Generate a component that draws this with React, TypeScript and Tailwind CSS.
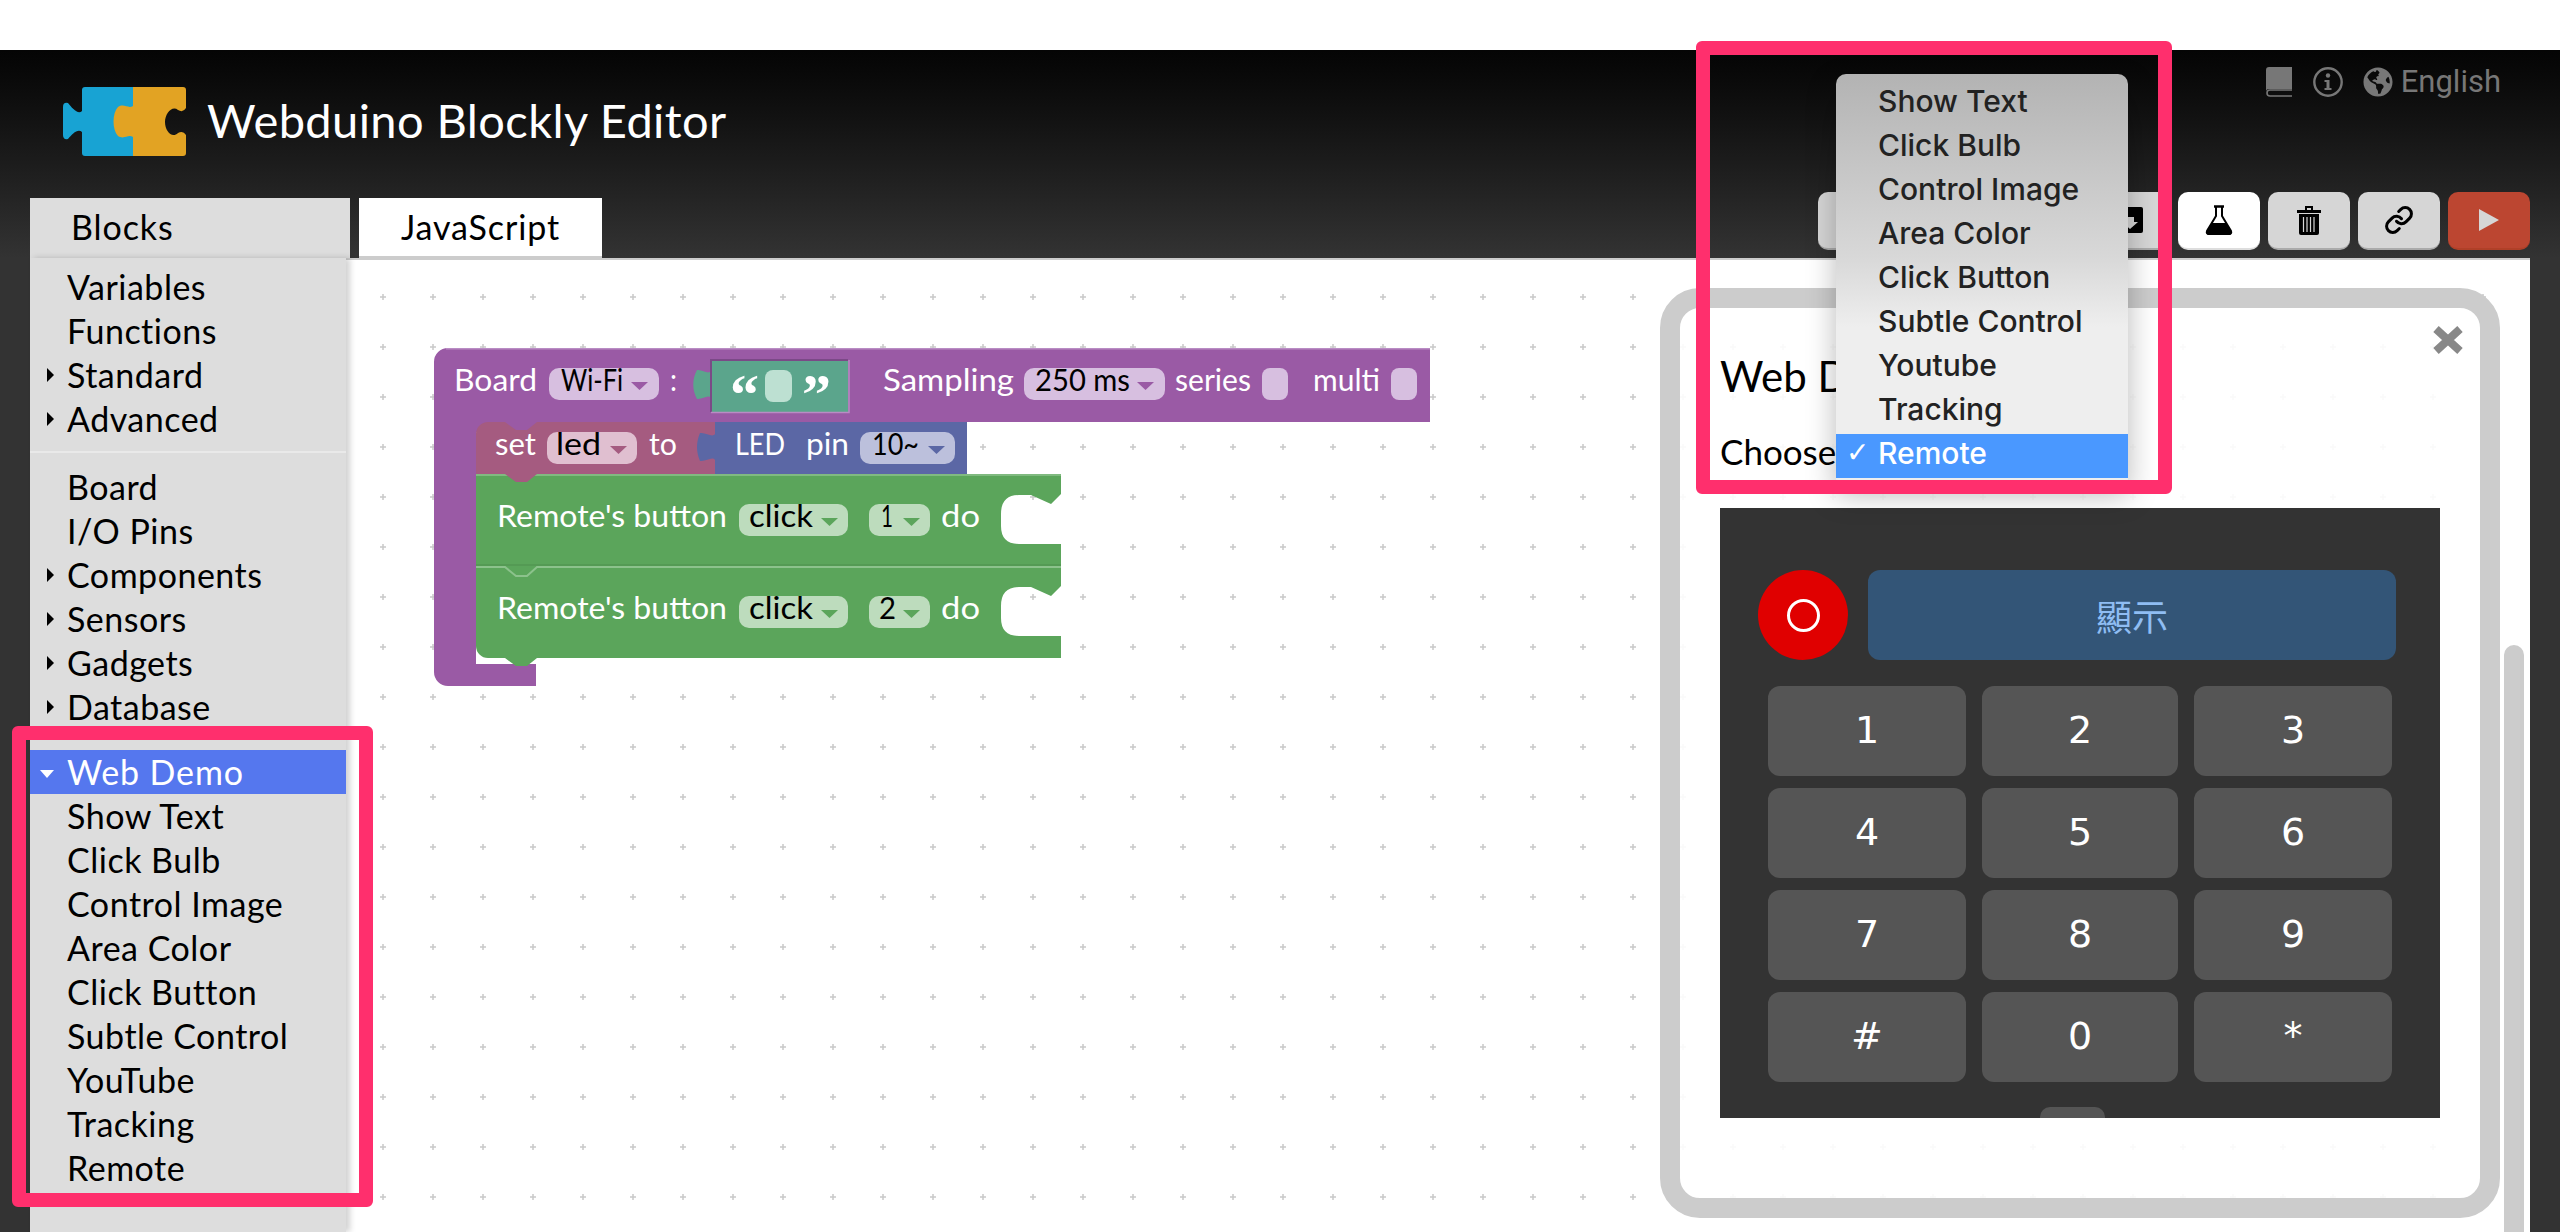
import { FaGlobeAmericas } from "react-icons/fa";
import { Link } from "lucide-react";

const sans = "font-['Lato','Liberation_Sans',sans-serif]";

const topGroup = [
  { label: "Variables" },
  { label: "Functions" },
  { label: "Standard", arrow: true },
  { label: "Advanced", arrow: true },
];

const midGroup = [
  { label: "Board" },
  { label: "I/O Pins" },
  { label: "Components", arrow: true },
  { label: "Sensors", arrow: true },
  { label: "Gadgets", arrow: true },
  { label: "Database", arrow: true },
];

const demoItems = [
  "Show Text",
  "Click Bulb",
  "Control Image",
  "Area Color",
  "Click Button",
  "Subtle Control",
  "YouTube",
  "Tracking",
  "Remote",
];

const menuItems = [
  "Show Text",
  "Click Bulb",
  "Control Image",
  "Area Color",
  "Click Button",
  "Subtle Control",
  "Youtube",
  "Tracking",
];

const keys = ["1", "2", "3", "4", "5", "6", "7", "8", "9", "#", "0", "*"];

function Logo() {
  return (
    <svg width="124" height="70" viewBox="63 87 124 70" className="shrink-0">
      <path
        d="M85 87 H133 V156 H85 a3 3 0 0 1 -3 -3 V132 C78 128 72 134 68 139 Q63 140 63 135 V107 Q63 102 68 103 C72 108 78 115 82 111 V90 a3 3 0 0 1 3 -3 Z"
        fill="#18a3d3"
      />
      <path
        d="M133 87 H183 a3 3 0 0 1 3 3 V108 Q183 113 178 110 C172 105 165 114 165 122 C165 131 172 139 178 133 Q183 130 186 135 V153 a3 3 0 0 1 -3 3 H133 V137 C128 134 124 140 118 136 C112 130 112 113 118 107 C124 103 128 109 133 106 Z"
        fill="#e2a323"
      />
    </svg>
  );
}

function Arrow() {
  return <span className="absolute left-[17px] top-[15px] h-0 w-0 border-y-[7px] border-l-[7px] border-y-transparent border-l-black" />;
}

function Row({ label, arrow }: { label: string; arrow?: boolean }) {
  return (
    <div className="relative flex h-[44px] items-center pb-[2px] pl-[37px] text-[34px] tracking-[0.5px] text-black">
      {arrow && <Arrow />}
      {label}
    </div>
  );
}

function Sidebar() {
  return (
    <aside className={`relative z-10 w-[316px] shrink-0 bg-[#dddddd] pt-[7px] shadow-[4px_0_6px_rgba(0,0,0,0.18)] ${sans}`}>
      {topGroup.map((item) => (
        <Row key={item.label} {...item} />
      ))}
      <div className="my-[10px] h-[2px] bg-[#e9e9e9]" />
      <div className="mt-[12px]">
        {midGroup.map((item) => (
          <Row key={item.label} {...item} />
        ))}
      </div>
      <div className="mt-[9px] h-[2px] bg-[#e9e9e9]" />
      <div className="relative mt-[10px] flex h-[44px] items-center bg-[#5577ee] pb-[2px] pl-[37px] text-[34px] tracking-[0.9px] text-white">
        <span className="absolute left-[10px] top-[20px] h-0 w-0 border-x-[7px] border-t-[8px] border-x-transparent border-t-white" />
        Web Demo
      </div>
      {demoItems.map((label) => (
        <Row key={label} label={label} />
      ))}
    </aside>
  );
}

// text squeezed to the width measured in the picture
function T({ x, y, w, fill, children }: { x: number; y: number; w: number; fill?: string; children: string }) {
  return (
    <text x={x} y={y} textLength={w} lengthAdjust="spacingAndGlyphs" fontSize={31} fill={fill ?? "#ffffff"}>
      {children}
    </text>
  );
}

function Field({
  x,
  y,
  w,
  label,
  labelW,
  textX,
  arrowX,
  bg,
  arrowColor,
}: {
  x: number;
  y: number;
  w: number;
  label: string;
  labelW: number;
  textX: number;
  arrowX: number;
  bg: string;
  arrowColor: string;
}) {
  return (
    <g>
      <rect x={x} y={y} width={w} height={32} rx={10} fill={bg} />
      <T x={textX} y={y + 23} w={labelW} fill="#000000">
        {label}
      </T>
      <path d={`M${arrowX} ${y + 14} h17 l-8.5 8 Z`} fill={arrowColor} />
    </g>
  );
}

function greenPath(y: number, last: boolean) {
  const tail = last
    ? `V${y + 92} H537 L527 ${y + 100} H516 L505 ${y + 92} H488 a12 12 0 0 1 -12 -12 Z`
    : `V${y + 92} H476 Z`;
  return `M476 ${y} H1061 V${y + 20} L1051 ${y + 30} L1031 ${y + 21} H1019 Q1001 ${y + 21} 1001 ${y + 40} V${y + 52} Q1001 ${y + 70} 1019 ${y + 70} H1061 ${tail}`;
}

function Blocks() {
  const purpleField = "#d7bfe0";
  const purple = "#9a5aa5";
  const greenField = "#bddcbd";
  const green = "#5ba55b";

  return (
    <svg className="absolute left-0 top-0 h-[974px] w-[2184px]" viewBox="346 258 2184 974">
      <defs>
        <pattern id="dots" x="358" y="272" width="50" height="50" patternUnits="userSpaceOnUse">
          <path d="M25 22 V28 M22 25 H28" stroke="#c9c9c9" strokeWidth="1.5" />
        </pattern>
      </defs>
      <rect x="346" y="258" width="2184" height="974" fill="url(#dots)" />
      <g fontFamily="Lato, 'Liberation Sans', sans-serif">
        <path
          d="M434 362 a14 14 0 0 1 14 -14 H1430 V422 H540 V432 H476 V664 H536 V686 H448 a14 14 0 0 1 -14 -14 Z"
          fill={purple}
        />
        <path d="M446 348.8 H1430" stroke="#b98cc4" strokeWidth="1.5" />
        <path d={greenPath(474, false)} fill={green} />
        <path d={greenPath(566, true)} fill={green} />
        <path d="M476 567 H505 L516 576 H527 L537 567 H1061" fill="none" stroke="#8cc28c" strokeWidth="2" />
        <path d="M476 565 H1061" stroke="#4f8f4f" strokeWidth="1" />
        <path d="M476 475 H1061" stroke="#8cc28c" strokeWidth="1.5" />

        <path
          d="M476 434 a12 12 0 0 1 12 -12 H505 L516 430 H527 L537 422 H715 V474 H537 L527 482 H516 L505 474 H476 Z"
          fill="#a55b80"
        />
        <path
          d="M715 422 H967 V474 H715 V460 C712 456 706 462 700 461 C696 452 696 442 700 433 C706 432 712 438 715 434 Z"
          fill="#5b67a5"
        />
        <path
          d="M711 360 H848 V412 H711 V398 C708 394 702 400 697 399 C692 390 692 379 697 370 C702 369 708 375 711 371 Z"
          fill="#5ba58c"
        />
        <path d="M711 412 V360 H848" fill="none" stroke="#7b4987" strokeWidth="2" />
        <path d="M711 412.5 H849 V360" fill="none" stroke="#b98cc4" strokeWidth="1.5" />

        <T x={454} y={391} w={83}>Board</T>
        <Field x={549} y={368} w={110} label="Wi-Fi" labelW={62} textX={561} arrowX={631} bg={purpleField} arrowColor={purple} />
        <T x={670} y={391} w={7}>:</T>
        <text x="730" y="414" fill="#ffffff" fontSize="58" fontWeight="700" fontFamily="'Liberation Serif', serif">“</text>
        <rect x="765" y="370" width="27" height="32" rx="8" fill="#bde0d2" />
        <text x="802" y="414" fill="#ffffff" fontSize="58" fontWeight="700" fontFamily="'Liberation Serif', serif">”</text>
        <T x={883} y={391} w={131}>Sampling</T>
        <Field x={1024} y={368} w={141} label="250 ms" labelW={95} textX={1035} arrowX={1137} bg={purpleField} arrowColor={purple} />
        <T x={1175} y={391} w={76}>series</T>
        <rect x="1262" y="368" width="26" height="32" rx="8" fill={purpleField} />
        <T x={1313} y={391} w={67}>multi</T>
        <rect x="1391" y="368" width="26" height="32" rx="8" fill={purpleField} />

        <T x={495} y={455} w={41}>set</T>
        <Field x={547} y={432} w={90} label="led" labelW={45} textX={556} arrowX={610} bg="#e0bfd0" arrowColor="#a55b80" />
        <T x={649} y={455} w={28}>to</T>
        <T x={735} y={455} w={50}>LED</T>
        <T x={806} y={455} w={43}>pin</T>
        <Field x={860} y={432} w={95} label="10~" labelW={47} textX={872} arrowX={928} bg="#bcc0dc" arrowColor="#5b67a5" />

        <T x={497} y={527} w={230}>Remote's button</T>
        <Field x={739} y={504} w={109} label="click" labelW={64} textX={749} arrowX={821} bg={greenField} arrowColor={green} />
        <Field x={869} y={504} w={61} label="1" labelW={12} textX={881} arrowX={903} bg={greenField} arrowColor={green} />
        <T x={941} y={527} w={39}>do</T>

        <T x={497} y={619} w={230}>Remote's button</T>
        <Field x={739} y={596} w={109} label="click" labelW={64} textX={749} arrowX={821} bg={greenField} arrowColor={green} />
        <Field x={869} y={596} w={61} label="2" labelW={17} textX={879} arrowX={903} bg={greenField} arrowColor={green} />
        <T x={941} y={619} w={39}>do</T>
      </g>
    </svg>
  );
}

function RemotePanel() {
  return (
    <div className="relative mt-[37px] h-[610px] w-[720px] bg-[#333333] pl-[38px] pt-[62px]">
      <div className="flex items-center gap-[20px]">
        <div className="flex h-[90px] w-[90px] items-center justify-center rounded-full bg-[#e00000]">
          <div className="h-[33px] w-[33px] rounded-full border-[3px] border-white" />
        </div>
        <div className="flex h-[90px] w-[528px] items-center justify-center rounded-[12px] bg-[#335577] font-['Noto_Sans_CJK_TC',sans-serif] text-[36px] text-[#8fbdf3]">
          顯示
        </div>
      </div>
      <div className="ml-[10px] mt-[26px] grid w-[624px] grid-cols-[198px_196px_198px] gap-x-[16px] gap-y-[12px]">
        {keys.map((key) => (
          <div
            key={key}
            className="flex h-[90px] items-center justify-center rounded-[12px] bg-[#555555] pb-[2px] font-['DejaVu_Sans',sans-serif] text-[38px] text-white"
          >
            {key}
          </div>
        ))}
      </div>
      <div className="absolute bottom-0 left-[320px] h-[11px] w-[65px] rounded-t-[10px] bg-[#555555]" />
    </div>
  );
}

function Modal() {
  return (
    <div className={`absolute left-[1314px] top-[30px] h-[930px] w-[840px] rounded-[40px] border-[20px] border-[#cccccc] bg-white/90 pl-[40px] pt-[46px] ${sans}`}>
      <svg className="absolute right-[16px] top-[17px]" width="32" height="30" viewBox="0 0 32 30">
        <path d="M4 4 L28 26 M28 4 L4 26" stroke="#888888" strokeWidth="8" />
      </svg>
      <h2 className="text-[42px] leading-[44px] text-black">Web Demo</h2>
      <p className="mt-[33px] text-[35px] leading-[40px] text-black">Choose</p>
      <RemotePanel />
    </div>
  );
}

function Trash() {
  return (
    <svg width="24" height="30" viewBox="0 0 24 30">
      <path d="M0 5 H8 V1 H16 V5 H24 V8 H0 Z M10 3 V5 H14 V3 Z" fill="#000000" fillRule="evenodd" />
      <path d="M2 9 H22 V28 a2 2 0 0 1 -2 2 H4 a2 2 0 0 1 -2 -2 Z" fill="#000000" />
      <path d="M6.5 12 V27 M10 12 V27 M13.5 12 V27 M17 12 V27" stroke="#d6d6d6" strokeWidth="1.2" />
    </svg>
  );
}

function Flask() {
  return (
    <svg width="28" height="30" viewBox="0 0 28 30">
      <path d="M9 1.5 H19" stroke="#000000" strokeWidth="2.5" />
      <path d="M11 2 V11 L2 26 Q1 29 4 29 H24 Q27 29 26 26 L17 11 V2" fill="none" stroke="#000000" strokeWidth="2" />
      <path d="M7 18 H21 L26 26 Q27 30 24 30 H4 Q1 30 2 26 Z" fill="#000000" />
    </svg>
  );
}

function SaveIcon() {
  return (
    <svg width="28" height="26" viewBox="0 0 28 26">
      <path d="M5 0 H26 a2 2 0 0 1 2 2 V24 a2 2 0 0 1 -2 2 H2 a2 2 0 0 1 -2 -2 V5 Z" fill="#000000" />
      <path d="M11 10 H19 V15 H23 L15 22 L7 15 H11 Z" fill="#d6d6d6" />
    </svg>
  );
}

function Toolbar() {
  const base = "flex h-[58px] w-[82px] items-center justify-center rounded-[10px] border-b-[2px]";
  const grey = `${base} border-[#aaaaaa] bg-[#d6d6d6]`;
  return (
    <div className="flex h-[58px] gap-[8px]">
      <div className={`${grey} ml-[-4px]`} />
      <div className={grey} />
      <div className={grey} />
      <div className={grey}>
        <SaveIcon />
      </div>
      <div className={`${base} border-[#dddddd] bg-white`}>
        <Flask />
      </div>
      <div className={grey}>
        <Trash />
      </div>
      <div className={grey}>
        <Link size={30} strokeWidth={2.4} color="#000000" />
      </div>
      <div className={`${base} border-[#b04028] bg-[#bc4631]`}>
        <svg width="20" height="22" viewBox="0 0 20 22">
          <path d="M0 0 L20 11 L0 22 Z" fill="#d6d6d6" />
        </svg>
      </div>
    </div>
  );
}

function TopLinks() {
  return (
    <div className="flex items-center self-start pt-[14px] text-[#777777]">
      <svg width="26" height="30" viewBox="0 0 26 30">
        <path d="M3 0 H26 V22 H3 a3 3 0 0 0 -3 3 V3 a3 3 0 0 1 3 -3 Z" fill="#777777" />
        <path d="M26 23 H4 a3 3 0 0 0 0 6 H26" fill="none" stroke="#777777" strokeWidth="1.6" />
      </svg>
      <svg className="ml-[21px]" width="30" height="30" viewBox="0 0 30 30">
        <circle cx="15" cy="15" r="13.7" fill="none" stroke="#777777" strokeWidth="2.4" />
        <circle cx="15" cy="8.5" r="2.2" fill="#777777" />
        <path d="M11.5 13 H16.5 V21 H18.5 V23 H11.5 V21 H13.5 V15 H11.5 Z" fill="#777777" />
      </svg>
      <FaGlobeAmericas size={30} color="#777777" className="ml-[20px]" />
      <span className="ml-[8px] font-['Roboto',sans-serif] text-[31px] leading-[36px]">English</span>
    </div>
  );
}

function Header() {
  return (
    <header className={`h-[208px] bg-linear-to-b from-[#050505] to-[#333333] ${sans}`}>
      <div className="flex h-[142px] justify-between pl-[63px] pr-[59px]">
        <div className="flex items-start gap-[20px] pt-[37px]">
          <Logo />
          <h1 className="pt-[6px] text-[47px] leading-[54px] tracking-[0.4px] text-white">Webduino Blockly Editor</h1>
        </div>
        <TopLinks />
      </div>
      <div className="flex h-[66px] justify-between pl-[30px] pr-[30px]">
        <div className="mt-[6px] flex h-[60px] gap-[9px] text-[34px] tracking-[0.9px] text-black">
          <div className="flex w-[320px] items-center bg-[#dddddd] pb-[3px] pl-[41px]">Blocks</div>
          <div className="flex w-[243px] items-center justify-center border-b-[2px] border-[#cccccc] bg-white pb-[2px]">JavaScript</div>
        </div>
        <Toolbar />
      </div>
    </header>
  );
}

function SelectMenu() {
  return (
    <div className="absolute left-[1836px] top-[74px] z-20 h-[408px] w-[292px] rounded-t-[10px] bg-[linear-gradient(#b3b3b3_0%,#d8d8d8_45%,#eeeeee_62%,#eeeeee_100%)] pt-[8px] font-['Inter',sans-serif] text-[30px] font-medium text-[#222222] shadow-[0_12px_30px_rgba(0,0,0,0.28)]">
      {menuItems.map((label) => (
        <div key={label} className="flex h-[44px] items-center pb-[6px] pl-[42px]">
          {label}
        </div>
      ))}
      <div className="relative flex h-[44px] items-center bg-[#4a98ff] pb-[6px] pl-[42px] text-white">
        <span className="absolute left-[10px] font-['DejaVu_Sans',sans-serif] text-[28px] font-bold">✓</span>
        Remote
      </div>
    </div>
  );
}

export default function App() {
  return (
    <div className="relative flex h-[1232px] w-[2560px] flex-col overflow-hidden bg-white">
      <div className="h-[50px] shrink-0 bg-white" />
      <Header />
      <main className="flex min-h-0 flex-1 bg-[#333333] px-[30px]">
        <Sidebar />
        <section className="relative flex-1 overflow-hidden border-t-[2px] border-[#cccccc] bg-white">
          <div className="absolute left-0 top-[-2px] h-[974px] w-[2184px]">
            <Blocks />
            <Modal />
            <div className="absolute right-[6px] top-[387px] bottom-0 w-[20px] rounded-t-[10px] bg-[#cccccc]" />
          </div>
        </section>
      </main>
      <SelectMenu />
      <div className="absolute left-[1696px] top-[41px] z-30 h-[453px] w-[476px] rounded-[6px] border-[14px] border-[#ff2f6d]" />
      <div className="absolute left-[12px] top-[726px] z-30 h-[481px] w-[361px] rounded-[6px] border-[14px] border-[#ff2f6d]" />
    </div>
  );
}
